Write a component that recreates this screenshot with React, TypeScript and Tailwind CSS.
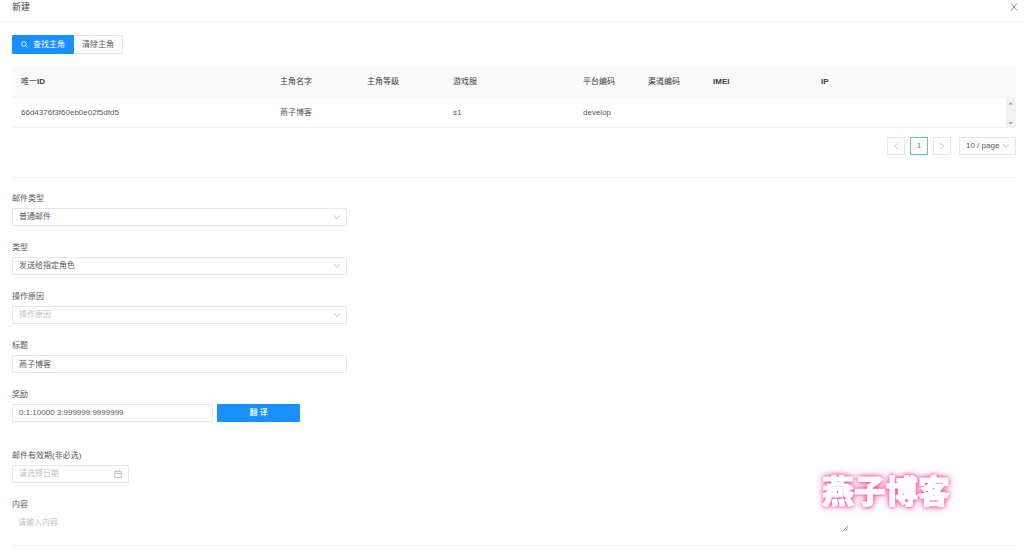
import type { ReactNode } from 'react';

const field =
  'block h-[18px] w-full appearance-none rounded-[1px] border border-[#e8e8e8] bg-white px-[6px] text-[8px] leading-[16px] outline-none placeholder:text-[#bfbfbf] focus:border-[#40a9ff]';

function Chevron({ className = '' }: { className?: string }) {
  return (
    <svg viewBox="0 0 8 8" className={`pointer-events-none size-[8px] ${className}`} fill="none" stroke="#c8c8c8" strokeWidth="0.9">
      <path d="M1.2 2 4 5.8 6.8 2" />
    </svg>
  );
}

function Field({ id, label, children }: { id: string; label: string; children: ReactNode }) {
  return (
    <div>
      <label htmlFor={id} className="block pt-px pb-[2px] leading-[14px]">
        {label}
      </label>
      {children}
    </div>
  );
}

function Select({ id, value, muted = false }: { id: string; value: string; muted?: boolean }) {
  return (
    <div className="relative w-1/3">
      <select id={id} className={`${field} ${muted ? 'text-[#bfbfbf]' : 'text-[#595959]'}`}>
        <option>{value}</option>
      </select>
      <Chevron className="absolute top-[5px] right-[6px]" />
    </div>
  );
}

const columns = [
  { title: '唯一', latin: 'ID', width: 'w-[259px]', value: '66d4376f3f60eb0e02f5dfd5' },
  { title: '主角名字', latin: '', width: 'w-[87px]', value: '燕子博客' },
  { title: '主角等级', latin: '', width: 'w-[86px]', value: '' },
  { title: '游戏服', latin: '', width: 'w-[130px]', value: 's1' },
  { title: '平台编码', latin: '', width: 'w-[65px]', value: 'develop' },
  { title: '渠道编码', latin: '', width: 'w-[65px]', value: '' },
  { title: '', latin: 'IMEI', width: 'w-[108px]', value: '' },
  { title: '', latin: 'IP', width: '', value: '' },
];

export default function App() {
  return (
    <div className="relative bg-white font-['Liberation_Sans','Noto_Sans_CJK_SC',sans-serif] text-[8px] leading-[14px] text-[#595959]">
      <header className="flex items-start justify-between border-b border-[#f4f4f4] pr-[6px] pb-[7px] pl-[12px]">
        <h1 className="text-[9px] leading-[14px] text-[#404040]">新建</h1>
        <button type="button" aria-label="关闭" className="flex h-[14px] items-center">
          <svg viewBox="0 0 8 8" className="size-[8px]" fill="none" stroke="#808080" strokeWidth="0.9">
            <path d="M1 0.5 7 7.5M7 0.5 1 7.5" />
          </svg>
        </button>
      </header>

      <main className="pt-[13px] pr-[8px] pl-[12px]">
        <div className="flex">
          <button type="button" className="flex h-[19px] items-center gap-[5px] rounded-l-[1px] bg-[#1890ff] px-[9px] text-white">
            <svg viewBox="0 0 8 8" className="size-[7px]" fill="none" stroke="currentColor" strokeWidth="0.9">
              <circle cx="3.3" cy="3.3" r="2.6" />
              <path d="M5.2 5.2 7.7 7.7" />
            </svg>
            查找主角
          </button>
          <button type="button" className="h-[19px] rounded-r-[1px] border border-l-0 border-[#e8e8e8] px-[8px]">
            清除主角
          </button>
        </div>

        <table className="mt-[12px] w-full table-fixed border-collapse text-left">
          <thead>
            <tr className="h-[31px] border-b border-[#f4f4f4] bg-[#fafafa] text-[#404040]">
              {columns.map((c) => (
                <th key={c.title + c.latin} scope="col" className={`${c.width} px-[9px] pt-[2px] font-normal`}>
                  {c.title}
                  <span className="font-bold">{c.latin}</span>
                </th>
              ))}
              <td className="w-[10px]" />
            </tr>
          </thead>
          <tbody>
            <tr className="h-[30px] border-b border-[#f4f4f4]">
              {columns.map((c) => (
                <td key={c.title + c.latin} className="px-[9px] pt-[2px]">
                  {c.value}
                </td>
              ))}
              <td className="bg-[#f1f1f1] p-0">
                <svg viewBox="0 0 10 29" className="block h-[29px] w-[10px]" fill="#a3a3a3">
                  <path d="M2.5 6.5 4.7 4 7 6.5zM2.5 24H7L4.7 26.5z" />
                </svg>
              </td>
            </tr>
          </tbody>
        </table>

        <nav aria-label="分页" className="mt-[9px] flex justify-end">
          <button type="button" aria-label="上一页" className="flex h-[18px] w-[18px] items-center justify-center border border-[#e8e8e8]">
            <Chevron className="rotate-90" />
          </button>
          <button type="button" className="ml-[5px] h-[18px] w-[18px] border border-[#69b8ff] text-[#1890ff]">
            1
          </button>
          <button type="button" aria-label="下一页" className="ml-[5px] flex h-[18px] w-[18px] items-center justify-center border border-[#e8e8e8]">
            <Chevron className="-rotate-90" />
          </button>
          <div className="relative ml-[8px]">
            <select aria-label="每页条数" className="block h-[18px] w-[57px] appearance-none border border-[#e8e8e8] bg-white px-[6px] text-[8px] outline-none">
              <option>10 / page</option>
            </select>
            <Chevron className="absolute top-[5px] right-[6px]" />
          </div>
        </nav>

        <form className="mt-[22px] border-t border-b border-[#f4f4f4] pt-[13px] pb-[13px]">
          <div className="flex flex-col gap-[14px]">
            <Field id="mail-type" label="邮件类型">
              <Select id="mail-type" value="普通邮件" />
            </Field>
            <Field id="target" label="类型">
              <Select id="target" value="发送给指定角色" />
            </Field>
            <Field id="reason" label="操作原因">
              <Select id="reason" value="操作原因" muted />
            </Field>
            <Field id="title" label="标题">
              <div className="w-1/3">
                <input id="title" className={field} defaultValue="燕子博客" />
              </div>
            </Field>
            <Field id="reward" label="奖励">
              <div className="flex gap-[4px]">
                <div className="w-1/5">
                  <input id="reward" className={field} defaultValue="0:1:10000 3:999999:9999999" />
                </div>
                <button type="button" className="h-[18px] w-1/12 rounded-[1px] bg-[#1890ff] font-medium text-white">
                  翻 译
                </button>
              </div>
            </Field>
          </div>

          <div className="mt-[26px] flex flex-col gap-[14px]">
            <Field id="expires" label="邮件有效期(非必选)">
              <div className="relative w-[117px]">
                <input id="expires" className={field} placeholder="请选择日期" />
                <svg viewBox="0 0 8 8" className="pointer-events-none absolute top-[5px] right-[7px] size-[8px]" fill="none" stroke="#b5b5b5" strokeWidth="0.8">
                  <path d="M0.7 1.3H7.3V7.4H0.7zM0.7 3.5H7.3M2.4 0.2V2.1M5.6 0.2V2.1" />
                </svg>
              </div>
            </Field>
            <Field id="content" label="内容">
              <div className="relative w-5/6">
                <textarea
                  id="content"
                  rows={1}
                  placeholder="请输入内容"
                  className="block h-[18px] w-full resize-none overflow-hidden px-[6px] py-[2px] leading-[14px] outline-none placeholder:text-[#bfbfbf]"
                />
                <svg viewBox="0 0 5 5" className="pointer-events-none absolute right-[1px] bottom-[1px] size-[5px]" fill="none" stroke="#555" strokeWidth="0.8">
                  <path d="M0.3 4.7 4.7 0.3M2.6 4.7 4.7 2.6" />
                </svg>
              </div>
            </Field>
          </div>
        </form>
      </main>

      <div className="pointer-events-none absolute right-[74px] bottom-[34px] text-[32px] leading-[40px] font-black text-white [-webkit-text-stroke:1px_#fff] [text-shadow:0_0_3px_#ff2d8f,0_0_5px_#ff2d8f,0_0_8px_#ff7dba]">
        燕子博客
      </div>
    </div>
  );
}
